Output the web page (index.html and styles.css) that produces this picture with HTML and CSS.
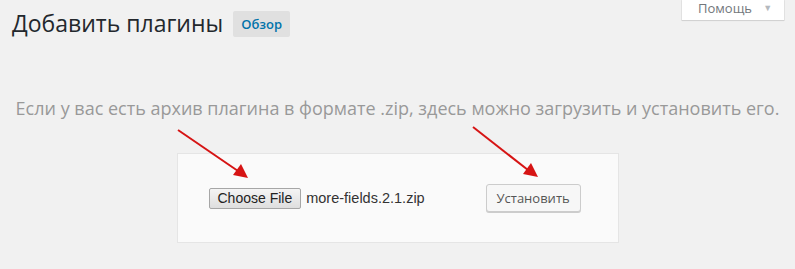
FILE: index.html
```html
<!DOCTYPE html>
<html lang="ru">
<head>
  <meta charset="UTF-8">
  <title>Добавить плагины</title>
  <link rel="stylesheet" href="styles.css">
</head>
<body>
  <div class="help-tab">Помощь <span class="help-arrow">▼</span></div>

  <div class="header">
    <h1>Добавить плагины</h1>
    <a class="badge" href="#">Обзор</a>
  </div>

  <p class="install-help">Если у вас есть архив плагина в формате .zip, здесь можно загрузить и установить его.</p>

  <form class="upload-box">
    <div class="file-field">
      <span class="file-btn">Choose File</span>
      <span class="file-name">more-fields.2.1.zip</span>
    </div>
    <button type="button" class="install-btn">Установить</button>
  </form>

  <!-- стрелки поверх скриншота -->
  <svg class="arrows" width="795" height="269" viewBox="0 0 795 269">
    <line x1="178" y1="130" x2="238" y2="171" stroke="#d61414" stroke-width="2"/>
    <polygon points="248,178 233,175 241,164" fill="#d61414"/>
    <line x1="473" y1="127" x2="528" y2="170" stroke="#d61414" stroke-width="2"/>
    <polygon points="538,177 523,174 531,163" fill="#d61414"/>
  </svg>
</body>
</html>
```

FILE: styles.css
```css
body {
  margin: 0;
  background: #f1f1f1;
  font-family: "Open Sans", Arial, sans-serif;
  color: #444;
  width: 795px;
  height: 269px;
  overflow: hidden;
  position: relative;
}
.header {
  display: flex;
  align-items: center;
  padding: 9px 0 0 12px;
}
h1 {
  margin: 0;
  font-size: 23px;
  font-weight: 400;
  line-height: 29px;
  color: #23282d;
}
.badge {
  margin-left: 10px;
  margin-top: 1px;
  padding: 0 8px;
  height: 26px;
  line-height: 26px;
  background: #e0e0e0;
  border-radius: 2px;
  color: #0073aa;
  font-size: 13px;
  font-weight: 600;
  text-decoration: none;
}
.help-tab {
  position: absolute;
  top: 0;
  left: 682px;
  width: 102px;
  height: 20px;
  box-sizing: border-box;
  background: #fff;
  box-shadow: 0 0 0 1px rgba(0,0,0,0.05), 0 1px 1px rgba(0,0,0,0.08);
  color: #72777c;
  font-size: 13px;
  line-height: 16px;
  padding-left: 16px;
}
.help-arrow {
  font-size: 9px;
  color: #b4b9be;
  margin-left: 8px;
  vertical-align: 2px;
}
.install-help {
  margin: 58px 0 0;
  text-align: center;
  font-size: 18px;
  line-height: 24px;
  color: #999;
}
.upload-box {
  display: flex;
  align-items: center;
  width: 442px;
  box-sizing: border-box;
  margin: 33px auto 0;
  padding: 30px;
  background: #fafafa;
  border: 1px solid #e5e5e5;
}
.file-field {
  width: 278px;
  display: flex;
  align-items: center;
  font-family: Arial, "Liberation Sans", sans-serif;
  font-size: 14px;
}
.file-btn {
  margin-left: 1px;
  height: 21px;
  box-sizing: border-box;
  padding: 0 8px;
  line-height: 19px;
  border: 1px solid #a6a6a6;
  border-radius: 2px;
  background: linear-gradient(#f4f4f4, #dedede);
  color: #222;
}
.file-name {
  margin-left: 5px;
  color: #333;
  font-size: 14.5px;
}
.install-btn {
  height: 28px;
  padding: 0 10px;
  font-family: "Open Sans", Arial, sans-serif;
  font-size: 13px;
  color: #555;
  background: #f7f7f7;
  border: 1px solid #ccc;
  border-radius: 3px;
  box-shadow: 0 1px 0 #ccc;
}
.arrows {
  position: absolute;
  top: 0;
  left: 0;
  pointer-events: none;
}
```
